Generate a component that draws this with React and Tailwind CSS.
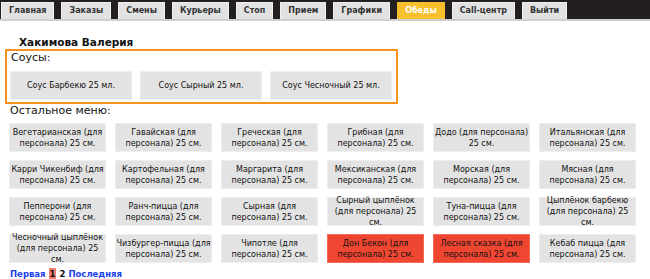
import React from 'react'

const tabs = ['Главная', 'Заказы', 'Смены', 'Курьеры', 'Стоп', 'Прием', 'Графики', 'Обеды', 'Call-центр', 'Выйти']

const sauces = ['Соус Барбекю 25 мл.', 'Соус Сырный 25 мл.', 'Соус Чесночный 25 мл.']

const menu = [
  ['Вегетарианская (для персонала) 25 см.'],
  ['Гавайская (для персонала) 25 см.'],
  ['Греческая (для персонала) 25 см.'],
  ['Грибная (для персонала) 25 см.'],
  ['Додо (для персонала) 25 см.'],
  ['Итальянская (для персонала) 25 см.'],
  ['Карри Чикенбиф (для персонала) 25 см.'],
  ['Картофельная (для персонала) 25 см.'],
  ['Маргарита (для персонала) 25 см.'],
  ['Мексиканская (для персонала) 25 см.'],
  ['Морская (для персонала) 25 см.'],
  ['Мясная (для персонала) 25 см.'],
  ['Пепперони (для персонала) 25 см.'],
  ['Ранч-пицца (для персонала) 25 см.'],
  ['Сырная (для персонала) 25 см.'],
  ['Сырный цыплёнок (для персонала) 25 см.'],
  ['Туна-пицца (для персонала) 25 см.'],
  ['Цыплёнок барбекю (для персонала) 25 см.'],
  ['Чесночный цыплёнок (для персонала) 25 см.'],
  ['Чизбургер-пицца (для персонала) 25 см.'],
  ['Чипотле (для персонала) 25 см.'],
  ['Дон Бекон (для персонала) 25 см.', true],
  ['Лесная сказка (для персонала) 25 см.', true],
  ['Кебаб пицца (для персонала) 25 см.'],
]

const App = () => {
  return (
    <div className="w-[650px] h-[279px] bg-white overflow-hidden text-[#111]" style={{ fontFamily: '"DejaVu Sans", Verdana, sans-serif' }}>
      <div className="bg-[#231f20] h-[21px] flex items-end gap-[7px] pl-[1px] border-b-2 border-[#cfcfcf]">
        {tabs.map((t) => (
          <div
            key={t}
            className={`h-[17px] px-[7px] flex items-center whitespace-nowrap text-[8px] font-bold border border-b-0 ${t === 'Обеды' ? 'bg-[#f6c02d] border-[#f6c02d] text-white' : 'bg-[#e2e2e2] border-[#f0f0f0] text-[#333]'}`}
          >
            {t}
          </div>
        ))}
      </div>

      <div className="pl-[5px]">
        <div className="pl-[14px] pt-[15px] text-[10.5px] font-bold leading-[13px]">Хакимова Валерия</div>

        <div className="w-[393px] border-2 border-[#f7931e] pl-[3px] pb-[2px]">
          <div className="text-[11px] leading-[14px] pl-[1px]">Соусы:</div>
          <div className="flex gap-[8px] mt-[6px]">
            {sauces.map((s) => (
              <div key={s} className="w-[122px] h-[29px] flex items-center justify-center text-[8px] bg-[#e3e3e3] border border-[#eeeeee]">
                {s}
              </div>
            ))}
          </div>
        </div>

        <div className="pl-[5px] text-[11px] leading-[14px]">Остальное меню:</div>

        <div className="pl-[4px] mt-[5px] grid grid-cols-[repeat(6,97px)] gap-x-[9px] gap-y-[8px]">
          {menu.map(([m, hot]) => (
            <div
              key={m}
              className={`h-[29px] flex items-center justify-center text-center text-[8px] leading-[11px] border ${hot ? 'bg-[#ef4632] border-[#f56a58]' : 'bg-[#e3e3e3] border-[#eeeeee]'}`}
            >
              {m}
            </div>
          ))}
        </div>

        <div className="pl-[5px] mt-[5px] text-[8.5px] font-bold flex items-center gap-[3px]">
          <a className="text-[#1a3ee8]">Первая</a>
          <span className="bg-[#f08070] px-[1px]">1</span>
          <span>2</span>
          <a className="text-[#1a3ee8]">Последняя</a>
        </div>
      </div>
    </div>
  )
}

export default App
